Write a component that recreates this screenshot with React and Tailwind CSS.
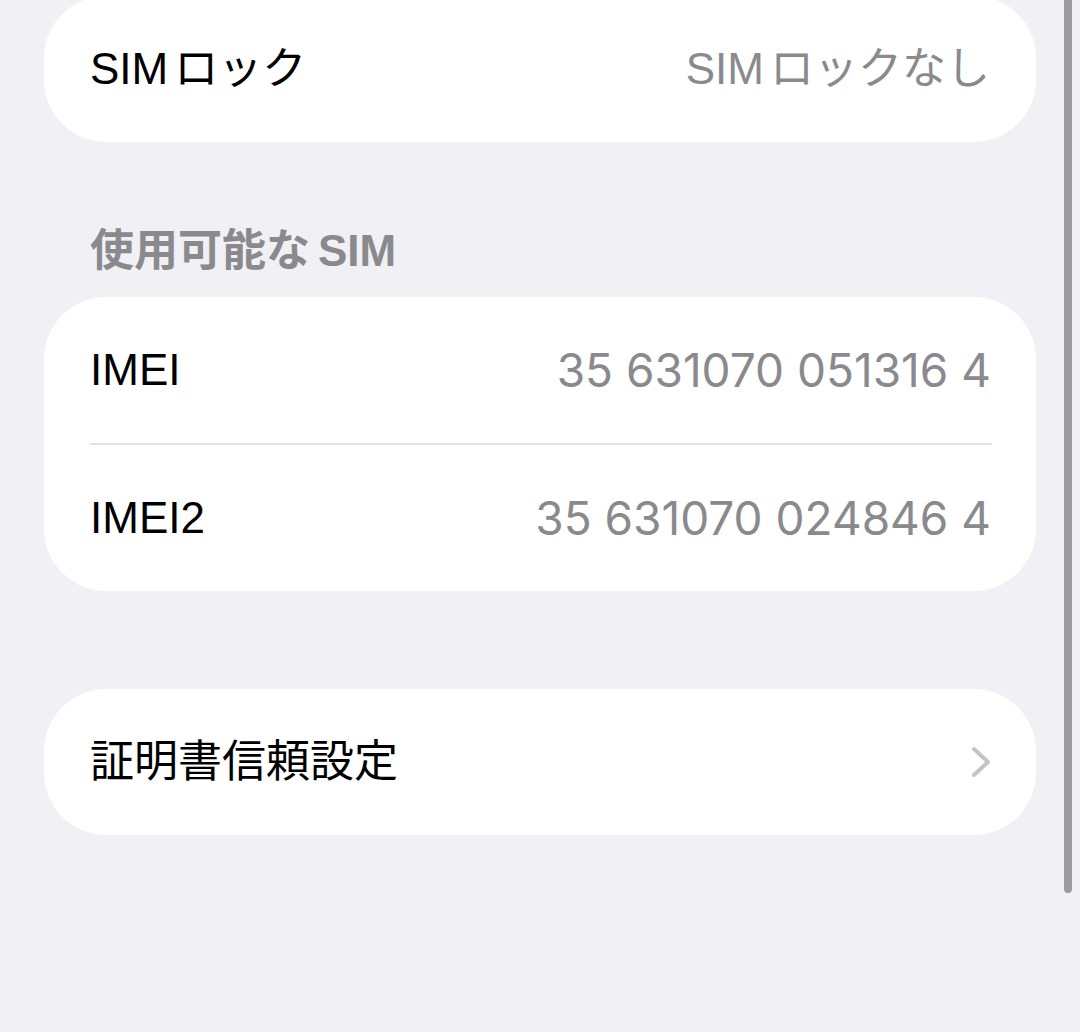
import React from "react";

const font = { fontFamily: '"Liberation Sans", "Noto Sans CJK JP", sans-serif' };
const digitFont = { fontFamily: 'Inter, "Liberation Sans", sans-serif' };

// One settings row: label on the left, value or chevron on the right
function Row({ label, value, chevron, digits }) {
    return (
        <div className="h-[146px] flex items-center justify-between pl-[46px] pr-[46px]">
            <span className="text-[44px] leading-[52px] text-black">{label}</span>
            {value && (
                <span
                    className={`leading-[52px] text-[#8a8a8e] ${digits ? "text-[46px] mr-[-1px]" : "text-[44px]"}`}
                    style={digits ? digitFont : undefined}
                >
                    {value}
                </span>
            )}
            {chevron && (
                <svg width="22" height="34" viewBox="0 0 22 34" className="mr-[-2px]">
                    <path d="M4 4 L18 17 L4 30" fill="none" stroke="#c4c4c8" strokeWidth="4" strokeLinecap="round" strokeLinejoin="round" />
                </svg>
            )}
        </div>
    );
}

export default function App() {
    return (
        <div className="relative h-[1032px] overflow-hidden bg-[#f0f0f5] px-[44px]" style={font}>
            {/* SIM lock card (top cut off) */}
            <div className="-mt-[4px] bg-white rounded-[62px]">
                <Row
                    label={<>SIM<span className="ml-[6px]">ロック</span></>}
                    value={<>SIM<span className="ml-[6px]">ロックなし</span></>}
                />
            </div>

            {/* Section header */}
            <div className="pt-[83px] pb-[20px] pl-[46px]">
                <span className="text-[44px] leading-[52px] font-semibold text-[#8a8a8e]">
                    使用可能な<span className="ml-[8px]">SIM</span>
                </span>
            </div>

            {/* IMEI card */}
            <div className="bg-white rounded-[62px]">
                <Row label="IMEI" value="35 631070 051316 4" digits />
                <div className="ml-[46px] mr-[44px] h-[2px] bg-[#e2e2e6]"></div>
                <Row label="IMEI2" value="35 631070 024846 4" digits />
            </div>

            {/* Certificate trust settings */}
            <div className="mt-[98px] bg-white rounded-[62px]">
                <Row label="証明書信頼設定" chevron />
            </div>

            {/* Scroll indicator */}
            <div className="absolute right-[8px] top-0 w-[8px] h-[893px] rounded-b-full bg-[#9c9ca1]"></div>
        </div>
    );
}
